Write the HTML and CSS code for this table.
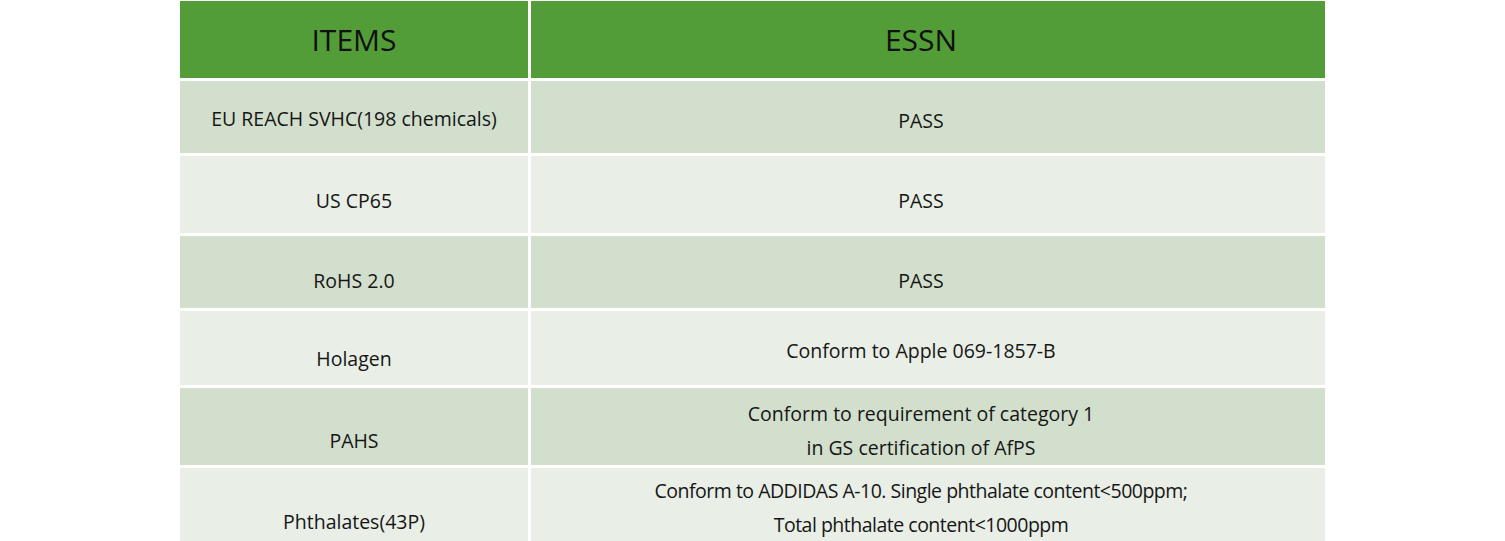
FILE: index.html
```html
<!DOCTYPE html>
<html>
<head>
<meta charset="utf-8">
<link rel="stylesheet" href="styles.css">
</head>
<body>
<table class="spec">
  <colgroup><col class="c-item"><col class="c-val"></colgroup>
  <thead>
    <tr class="head"><th class="k">ITEMS</th><th class="v">ESSN</th></tr>
  </thead>
  <tbody>
    <tr class="dark r1"><td class="k">EU REACH SVHC(198 chemicals)</td><td class="v">PASS</td></tr>
    <tr class="light r2"><td class="k">US CP65</td><td class="v">PASS</td></tr>
    <tr class="dark r3"><td class="k">RoHS 2.0</td><td class="v">PASS</td></tr>
    <tr class="light r4"><td class="k">Holagen</td><td class="v">Conform to Apple 069-1857-B</td></tr>
    <tr class="dark r5"><td class="k">PAHS</td><td class="v">Conform to requirement of category 1<br>in GS certification of AfPS</td></tr>
    <tr class="light r6"><td class="k">Phthalates(43P)</td><td class="v">Conform to ADDIDAS A-10. Single phthalate content&lt;500ppm;<br>Total phthalate content&lt;1000ppm</td></tr>
  </tbody>
</table>
</body>
</html>
```
FILE: styles.css
```css
html, body {
  margin: 0;
  padding: 0;
  background: #ffffff;
  overflow: hidden;
}
body {
  font-family: "Open Sans", "Noto Sans", sans-serif;
  color: #161616;
}
.spec {
  border-collapse: separate;
  border-spacing: 3px;
  width: 1151px;
  margin: -2px auto 0;
  table-layout: fixed;
}
.c-item { width: 348px; }
.c-val { width: 794px; }
.spec th, .spec td {
  padding: 0;
  text-align: center;
}
.spec .v { padding-right: 14px; }
.head { height: 77px; }
.head th {
  background: #529d38;
  font-size: 30px;
  font-weight: 400;
  color: #111;
  vertical-align: middle;
}
.spec td {
  font-size: 19.5px;
  line-height: 34px;
  vertical-align: top;
}
.dark td { background: #d2dfcc; }
.light td { background: #e9eee6; }
.r1 { height: 72px; }
.r2 { height: 77px; }
.r3 { height: 72px; }
.r4 { height: 74px; }
.r5 { height: 75px; }
.r6 { height: 80px; }
.r1 .k { padding-top: 21px; }
.r1 .v { padding-top: 23px; }
.r2 .k, .r2 .v { padding-top: 28px; }
.r3 .k, .r3 .v { padding-top: 28px; }
.r4 .k { padding-top: 31px; }
.r4 .v { padding-top: 23px; }
.r5 .k { padding-top: 36px; }
.r5 .v { padding-top: 9px; }
.r6 .k { padding-top: 37px; }
.r6 .v { padding-top: 6px; letter-spacing: -0.5px; }
```
